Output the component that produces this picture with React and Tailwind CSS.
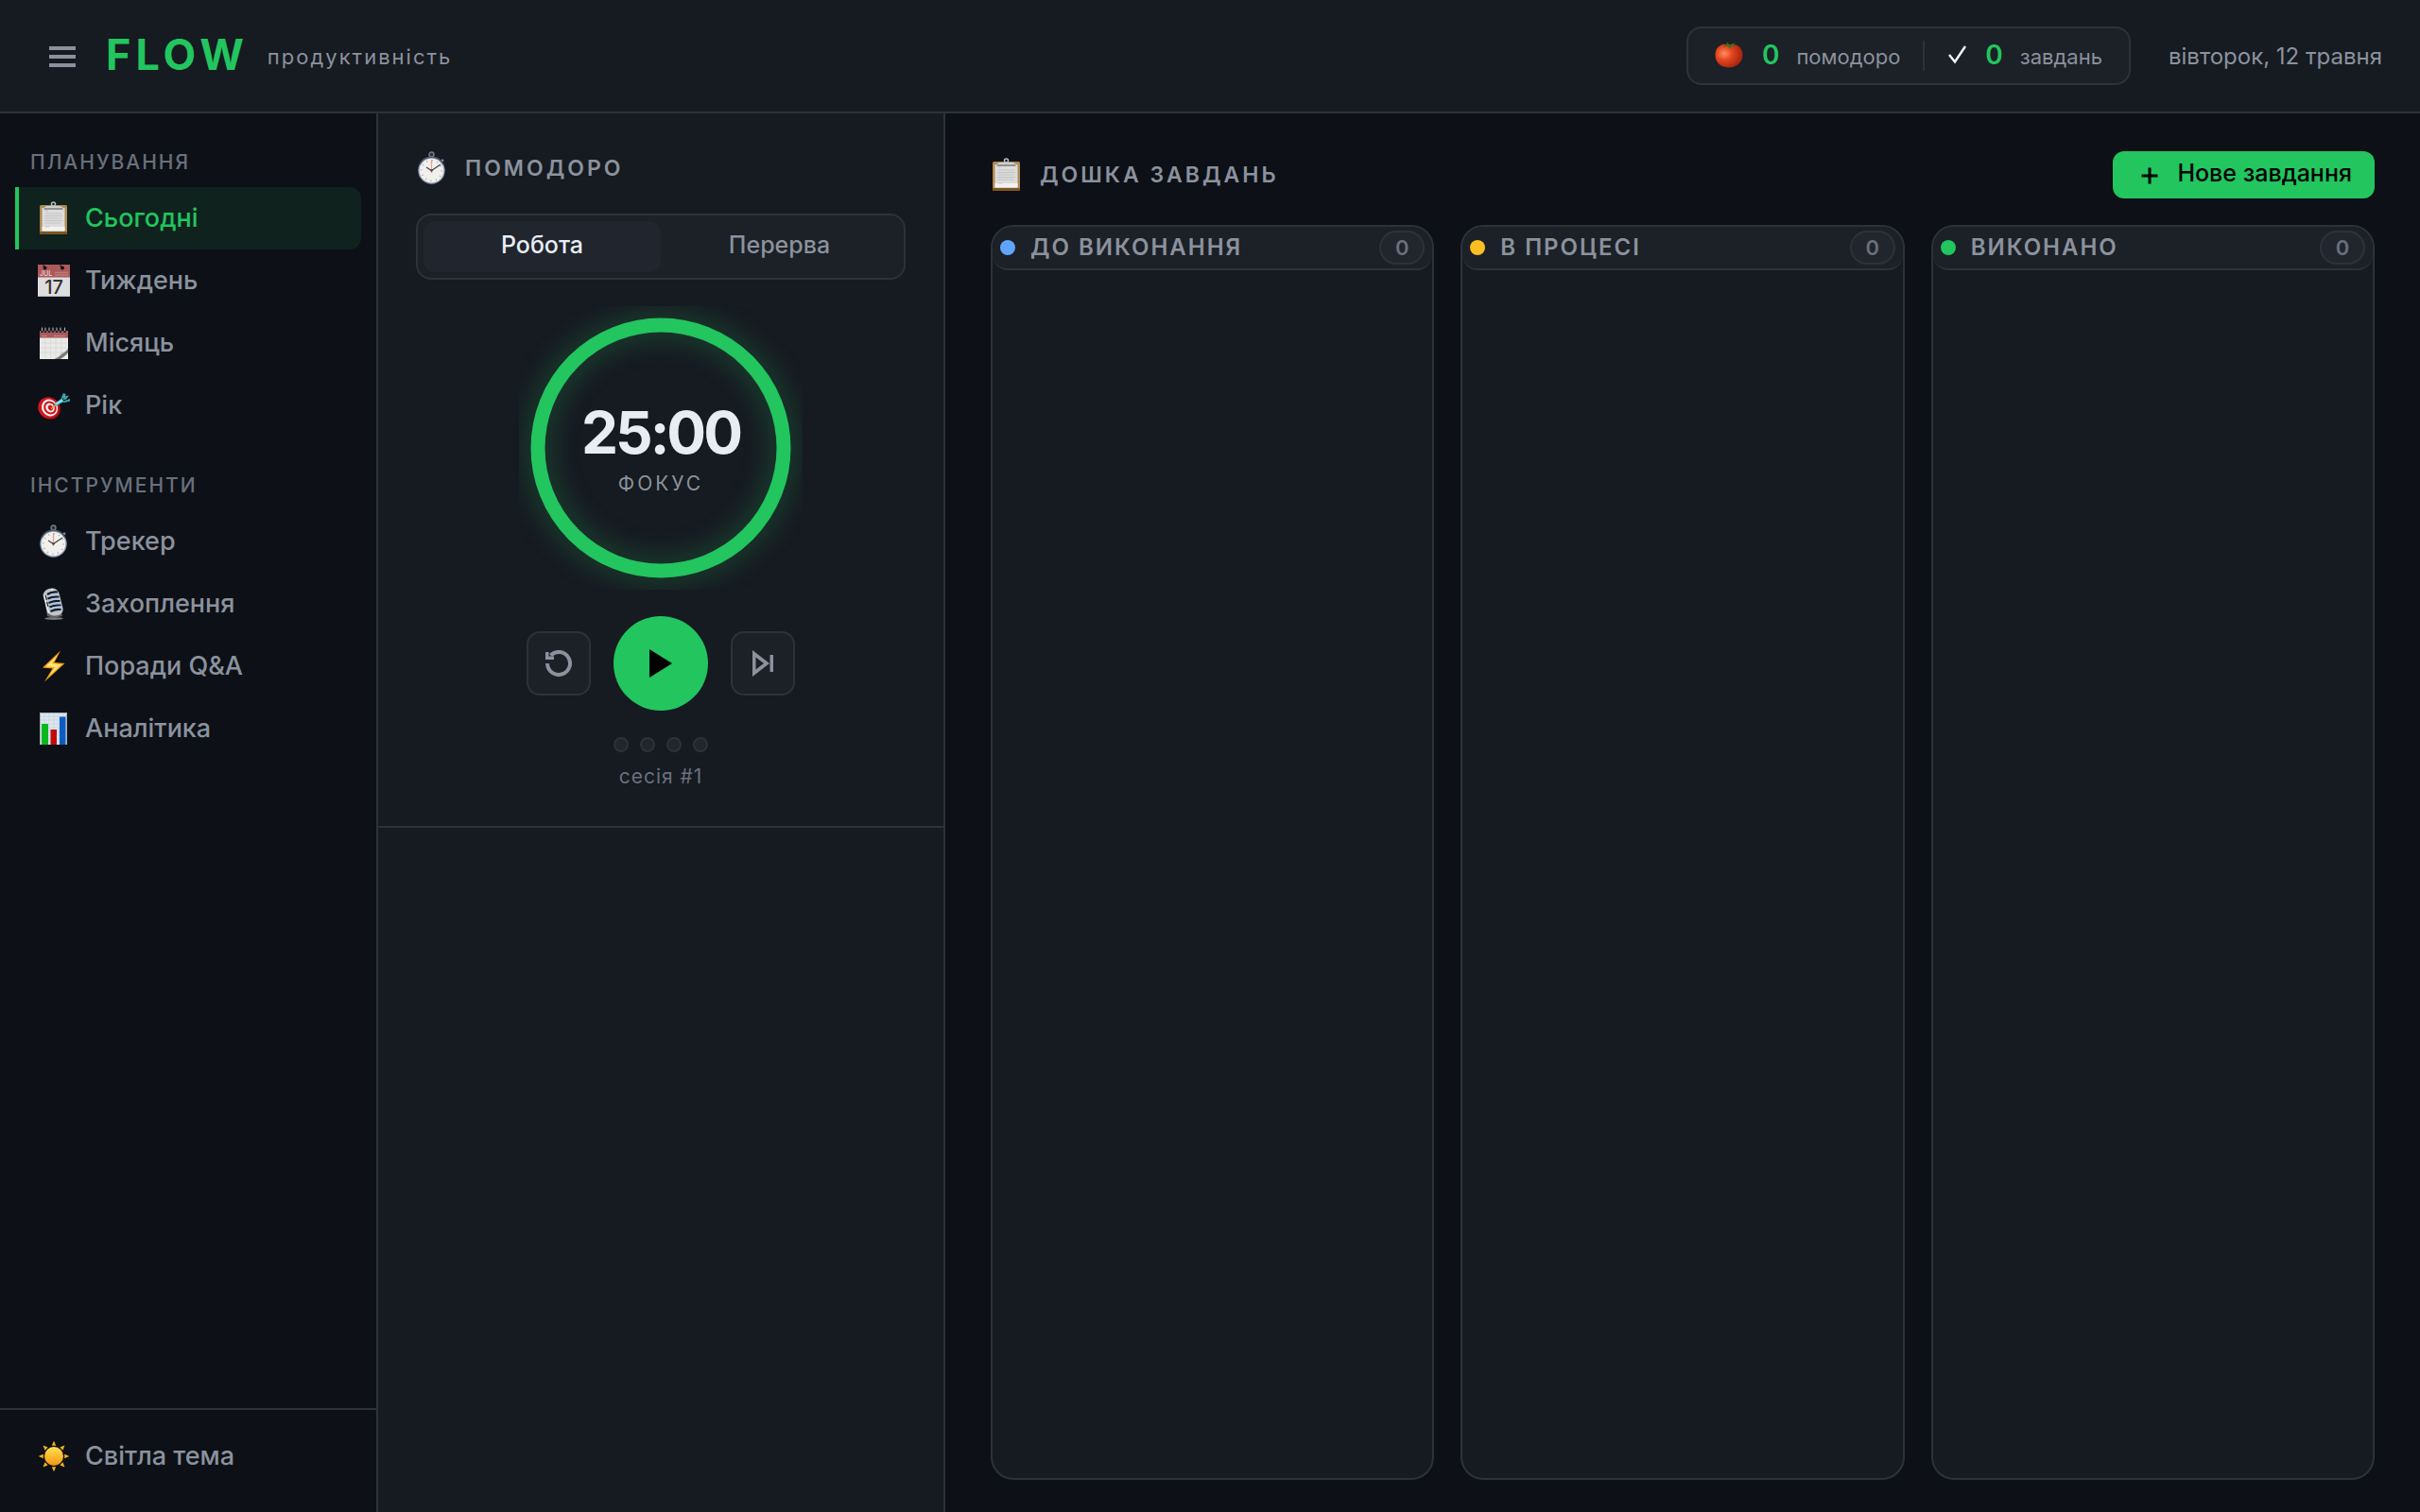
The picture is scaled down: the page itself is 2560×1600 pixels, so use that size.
import { useState } from "react";

const svgProps = { viewBox: "0 0 34 34", className: "h-[34px] w-[34px] shrink-0 overflow-visible", "aria-hidden": true };

function Clipboard() {
  return (
    <svg {...svgProps}>
      <rect x="2" y="3" width="29" height="31" rx="1.5" fill="#b08a50" />
      <rect x="2" y="31" width="29" height="3" rx="1" fill="#7c5624" />
      <rect x="4.500" y="6" width="24" height="24.500" fill="#dcdcdc" />
      <rect x="4.500" y="26" width="24" height="4.500" fill="#f2f2f2" />
      <path d="M8 12h17M7 14.500h19M7 17h18M7 19.500h19M7 22h17M8 26h4M8 9h3" stroke="#c4c4c4" strokeWidth="1" />
      <path d="M6.500 7.500V5.500l3-1.500h14l3 1.500v2z" fill="#d0d2d4" />
      <path d="M6.500 7h20" stroke="#6d6563" strokeWidth="1.200" />
      <circle cx="16.500" cy="2" r="2" fill="none" stroke="#b9c0c4" strokeWidth="1.500" />
    </svg>
  );
}

function CalendarDay() {
  return (
    <svg {...svgProps}>
      <rect width="34" height="34" fill="#dedede" />
      <rect width="34" height="13.500" fill="#ac5a5c" />
      <path d="M0 13.500h34" stroke="#c99999" strokeWidth="0.800" />
      <path d="M0 33.500h34" stroke="#b5b5b5" />
      <circle cx="7.500" cy="3.500" r="2" fill="#170e10" />
      <circle cx="26" cy="3.500" r="2" fill="#170e10" />
      <path d="M5.500 0.500l2 2.500M23.500 0.500l2 2.500" stroke="#170e10" strokeWidth="1.200" />
      <path d="M18.500 8.500h13M18.500 11h13" stroke="#cf9c9c" strokeWidth="1.600" strokeDasharray="1 1" />
      <text x="2" y="11.500" fontSize="7" fontFamily="Inter, sans-serif" fill="#f0d6d6">JUL</text>
      <text x="17" y="30.500" fontSize="20" textAnchor="middle" fontFamily="Inter, sans-serif" fill="#333">17</text>
    </svg>
  );
}

function CalendarSpiral() {
  return (
    <svg {...svgProps}>
      <rect x="2" y="4" width="30" height="30" fill="#e9e9e7" />
      <rect x="2" y="4" width="30" height="7.500" fill="#a9595b" />
      <path d="M3 17h28M3 22h27M3 27h22M8 12v21M13.500 12v21M19 12v20M25 12v15" stroke="#d6d6d4" strokeWidth="0.700" />
      <path d="M4.500 9.500h5M17 9.500h12" stroke="#cf9494" strokeWidth="1.200" strokeDasharray="2 0.800" />
      <path d="M4.500 1v5M8 1v5M12 1v5M16 1v5M20 1v5M24 1v5M28.500 1v5" stroke="#20272b" strokeWidth="2.400" />
      <path d="M4.500 0.500v3.500M8 0.500v3.500M12 0.500v3.500M16 0.500v3.500M20 0.500v3.500M24 0.500v3.500M28.500 0.500v3.500" stroke="#a4b4ba" strokeWidth="1" />
      <path d="M17 34c5-2 7-4 8-7 3 0 5-2 7-5v12z" fill="#b9b9b7" />
      <path d="M18 34c6-3 10-7 14-10v3c-3 3-6 5-8 7z" fill="#767674" />
      <path d="M24 34c3-1 6-4 8-6v6z" fill="#f3f3f1" />
    </svg>
  );
}

function Target() {
  return (
    <svg {...svgProps}>
      <g transform="translate(0 3)">
        <ellipse cx="13" cy="17.500" rx="11" ry="11.500" fill="#7d0f14" transform="rotate(-35 13 17.500)" />
        <ellipse cx="11.500" cy="16.500" rx="11" ry="11.500" fill="#d2161d" transform="rotate(-35 11.500 16.500)" />
        <ellipse cx="12.500" cy="16.500" rx="8.300" ry="9.300" fill="#f7efef" transform="rotate(-35 12.500 16.500)" />
        <ellipse cx="13" cy="16.500" rx="6.500" ry="7.300" fill="#cf141b" transform="rotate(-35 13 16.500)" />
        <ellipse cx="13" cy="16.500" rx="4.500" ry="5.200" fill="#f7efef" transform="rotate(-35 13 16.500)" />
        <ellipse cx="13.500" cy="16.500" rx="2.500" ry="3" fill="#cf141b" transform="rotate(-35 13.500 16.500)" />
        <path d="M14 17.500l5-4" stroke="#e0a23a" strokeWidth="1.500" />
        <path d="M17.500 12l8-5.500 2 3.500-9 5z" fill="#46c6d1" />
        <path d="M24.500 7l2.500-6 2.500 1-.5 4zM26 8.500l4-4.500 3-.5-3 4zM26 10l8-3v2.500L28 11z" fill="#3fa9ad" />
        <path d="M19 12.500l7-4" stroke="#b1f2f4" strokeWidth="1.200" />
      </g>
    </svg>
  );
}

function Stopwatch() {
  return (
    <svg {...svgProps}>
      <circle cx="16.500" cy="2.500" r="2.500" fill="#25303a" stroke="#71808c" strokeWidth="1.400" />
      <path d="M16.500 4.500v3" stroke="#8f9aa5" strokeWidth="4" />
      <path d="M26 10.500l3-2.500" stroke="#74879b" strokeWidth="2.600" />
      <circle cx="16.500" cy="19.500" r="14.200" fill="#8fa0b3" />
      <path d="M4 13a14 14 0 0 1 25 0" stroke="#4b5664" strokeWidth="1.500" fill="none" />
      <circle cx="16.500" cy="19.500" r="12.800" fill="#f1f0ef" />
      <circle cx="16.500" cy="19.500" r="10.700" fill="none" stroke="#9b9b9b" strokeWidth="1.600" strokeDasharray="0.900 4.700" />
      <path d="M16.500 8v14" stroke="#eda28f" strokeWidth="1.300" />
      <path d="M11 16l5.500 3.500L26 13" stroke="#3e464b" strokeWidth="1.200" fill="none" />
      <circle cx="16.500" cy="19.500" r="1.200" fill="#54463f" />
    </svg>
  );
}

function Microphone() {
  return (
    <svg {...svgProps}>
      <ellipse cx="17" cy="32.500" rx="10" ry="1.500" fill="#77787a" />
      <path d="M8 18l2 12 6 2 10-2-1-4z" fill="#5f6061" />
      <path d="M5.500 8C6 3 11 0 16 .5c4 .5 6 3 7 7l3.500 14c1 5-3 8-8 8-5 0-8-2-9-6z" fill="#bcc4c9" />
      <path d="M10 7c3-2 7-3 11-2.500M10.500 11.500c4-2 8-2.500 12-2M11.500 16c4-2 8-2.500 12-2M12.500 20.500c4-2 8-2.500 12-2M13.500 25c4-2 8-2.500 11-2" stroke="#15191d" strokeWidth="2.200" fill="none" />
      <path d="M10 9.500c4-2 8-2.500 12-2M11 14c4-2 8-2.500 12-2M12 18.500c4-2 8-2.500 12-2M13 22.500c4-2 8-2.500 12-2" stroke="#a9c3ea" strokeWidth="1.800" fill="none" />
      <path d="M7 8l4.500 19M15 1v2" stroke="#eef1f2" strokeWidth="1.500" />
      <path d="M8 8l1.500 5M9.500 15l1.500 5" stroke="#25292c" strokeWidth="1.200" />
    </svg>
  );
}

function Bolt() {
  return (
    <svg {...svgProps}>
      <path d="M24 .5L5 18.500l10.500 1L7 33.500 28.500 14l-11-1z" fill="#f6a10e" />
      <path d="M21 5L8.500 17.200l9.500.8-6 9.500 13-12.300-10-.9z" fill="#ffe681" />
    </svg>
  );
}

function BarChart() {
  return (
    <svg {...svgProps}>
      <rect x="2" y="0" width="29" height="34" fill="#dde6ee" />
      <path d="M3 4h27M3 8h27M3 12h27M3 16h27M3 20h27M3 24h27M3 28h27M7 1v32M12 1v32M17 1v32M22 1v32M27 1v32" stroke="#c3d0dc" strokeWidth="0.600" />
      <path d="M2.500 34V.5h28V34" stroke="#a8b0b9" fill="none" />
      <rect x="4" y="12" width="7" height="22" fill="#08b91b" />
      <rect x="13.500" y="18" width="6.500" height="16" fill="#c30a0c" />
      <rect x="23" y="4.500" width="6.500" height="29.500" fill="#0b5cc0" />
    </svg>
  );
}

function Sun() {
  return (
    <svg {...svgProps}>
      <defs>
        <linearGradient id="sun" x1="0" y1="0" x2="0" y2="1">
          <stop offset="0" stopColor="#ffe14d" />
          <stop offset="1" stopColor="#f09516" />
        </linearGradient>
      </defs>
      <circle cx="17" cy="17" r="10" fill="url(#sun)" />
      {[0, 45, 90, 135, 180, 225, 270, 315].map((a) => (
        <path key={a} d="M17 .8l2.200 5h-4.400z" fill="#f4b41e" transform={`rotate(${a} 17 17)`} />
      ))}
    </svg>
  );
}

function Tomato() {
  return (
    <svg viewBox="0 0 30 30" className="h-[30px] w-[30px]" aria-hidden="true">
      <defs>
        <radialGradient id="tomato" cx="0.330" cy="0.400" r="0.700">
          <stop offset="0" stopColor="#ff9166" />
          <stop offset="0.400" stopColor="#e6461f" />
          <stop offset="1" stopColor="#9c220d" />
        </radialGradient>
      </defs>
      <path d="M15 4.500C22 2 29.500 7 29.500 15S23 28.500 15 28.500.5 23.500.5 15 8 2 15 4.500z" fill="url(#tomato)" />
      <path d="M6 2.500l6 2 1.500-3 2 3L22 2l-3 2.500 5 1.500-6 0-2 2.500-2.500-3-4.500 1.500 1.500-2.500z" fill="#466b1e" />
    </svg>
  );
}

const planning = [
  ["Сьогодні", Clipboard],
  ["Тиждень", CalendarDay],
  ["Місяць", CalendarSpiral],
  ["Рік", Target],
];
const tools = [
  ["Трекер", Stopwatch],
  ["Захоплення", Microphone],
  ["Поради Q&A", Bolt],
  ["Аналітика", BarChart],
];

function NavItem({ label, Icon, active, onClick }) {
  return (
    <button
      type="button"
      onClick={onClick}
      className={`flex h-[66px] w-full items-center gap-4 rounded-r-xl border-l-4 pl-5 text-left text-[27px] font-medium ${
        active ? "border-[#22c55e] bg-[#0f221e] text-[#22c55e]" : "border-transparent text-[#8b929d]"
      }`}
    >
      <Icon />
      {label}
    </button>
  );
}

function NavGroup({ title, items, active, onSelect }) {
  return (
    <section>
      <h2 className="mb-3 px-4 text-[21px] leading-7 font-medium tracking-[2px] text-[#69707c]">{title}</h2>
      {items.map(([label, Icon]) => (
        <NavItem key={label} label={label} Icon={Icon} active={active === label} onClick={() => onSelect(label)} />
      ))}
    </section>
  );
}

function Stat({ icon, value, label }) {
  return (
    <div className="flex items-center gap-5 pb-0.5">
      {icon}
      <div className="flex items-baseline gap-[18px]">
        <span className="text-[28px] font-semibold text-[#22c55e]">{value}</span>
        <span className="text-[22px] text-[#8b929d]">{label}</span>
      </div>
    </div>
  );
}

function Column({ title, dot }) {
  return (
    <section className="flex-1 overflow-hidden rounded-3xl border-2 border-[#2d323a] bg-[#161a21]">
      <header className="flex h-[46px] items-center rounded-b-2xl border-b-2 border-[#2d323a] bg-[#1c2027] px-2">
        <span className={`h-4 w-4 rounded-full ${dot}`} />
        <h3 className="ml-4 flex-1 text-[24px] font-semibold tracking-[2px] text-[#8b929d]">{title}</h3>
        <span className="flex h-9 w-12 items-center justify-center rounded-full border-2 border-[#2d323a] bg-[#21252d] text-[22px] font-semibold text-[#69707c]">
          0
        </span>
      </header>
    </section>
  );
}

export default function App() {
  const [view, setView] = useState("Сьогодні");
  const [mode, setMode] = useState("Робота");
  return (
    <div className="flex min-h-screen flex-col bg-[#0d1017] font-[Inter,sans-serif] text-[#e8edf5]">
      <header className="flex h-[120px] items-center border-b-2 border-[#2d323a] bg-[#161a21] px-10">
        <button type="button" aria-label="Меню" className="mt-0.5 flex w-[52px] justify-center">
          <svg viewBox="0 0 28 22" className="h-[22px] w-7" fill="#8b929d">
            <path d="M0 0h28v4H0zM0 9h28v4H0zM0 18h28v4H0z" />
          </svg>
        </button>
        <div className="ml-5 flex items-center gap-5">
          <h1 className="pb-0.5 text-[45px] font-bold tracking-[5px] text-[#22c55e]">FLOW</h1>
          <span className="pt-0.5 text-[22px] tracking-[2px] text-[#8b929d]">продуктивність</span>
        </div>
        <div className="ml-auto flex h-[62px] items-center rounded-2xl border-2 border-[#2d323a] bg-[#1c2027] px-7">
          <Stat icon={<Tomato />} value="0" label="помодоро" />
          <div className="mx-6 h-8 w-0.5 bg-[#2d323a]" />
          <Stat
            icon={
              <svg viewBox="0 0 20 20" className="h-5 w-5" fill="none" stroke="#f1f4fa" strokeWidth="2.500" aria-hidden="true">
                <path d="M2 10l6 7.500L19 1" />
              </svg>
            }
            value="0"
            label="завдань"
          />
        </div>
        <time className="ml-10 pt-0.5 text-[24px] text-[#8b929d]">вівторок, 12 травня</time>
      </header>

      <div className="flex flex-1">
        <nav className="flex w-[400px] shrink-0 flex-col border-r-2 border-[#2d323a]">
          <div className="flex flex-1 flex-col gap-[38px] px-4 pt-[38px]">
            <NavGroup title="ПЛАНУВАННЯ" items={planning} active={view} onSelect={setView} />
            <NavGroup title="ІНСТРУМЕНТИ" items={tools} active={view} onSelect={setView} />
          </div>
          <div className="border-t-2 border-[#2d323a] px-4 pt-4 pb-[26px]">
            <NavItem label="Світла тема" Icon={Sun} />
          </div>
        </nav>

        <aside className="w-[600px] shrink-0 border-r-2 border-[#2d323a] bg-[#161a21]">
          <section className="flex flex-col items-center border-b-2 border-[#2d323a] px-10 pt-10 pb-10">
            <h2 className="flex h-9 items-center gap-[18px] self-stretch text-[23px] font-semibold tracking-[3px] text-[#8b929d]">
              <Stopwatch />
              ПОМОДОРО
            </h2>
            <div className="mt-[30px] flex h-[70px] self-stretch rounded-2xl border-2 border-[#2d323a] bg-[#1c2027] p-1.5">
              {["Робота", "Перерва"].map((m) => (
                <button
                  key={m}
                  type="button"
                  onClick={() => setMode(m)}
                  className={`flex-1 rounded-xl pb-0.5 text-[25px] font-medium ${
                    mode === m ? "bg-[#21252d] text-[#e8edf5]" : "text-[#8b929d]"
                  }`}
                >
                  {m}
                </button>
              ))}
            </div>
            <div className="mt-7 grid place-items-center">
              <svg viewBox="0 0 300 300" className="col-start-1 row-start-1 h-[300px] w-[300px] overflow-hidden">
                <circle
                  cx="150"
                  cy="150"
                  r="130"
                  fill="none"
                  stroke="#22c55e"
                  strokeWidth="15"
                  className="drop-shadow-[0_0_16px_rgba(34,197,94,0.400)]"
                />
              </svg>
              <div className="col-start-1 row-start-1 flex flex-col items-center pt-1">
                <span className="text-[62px] leading-[64px] font-bold tracking-[-3px]">25:00</span>
                <span className="mt-2 text-[21px] leading-7 tracking-[3px] text-[#8b929d]">ФОКУС</span>
              </div>
            </div>
            <div className="mt-7 flex items-center gap-6">
              <button
                type="button"
                aria-label="Скинути"
                className="flex h-[68px] w-[68px] items-center justify-center rounded-[14px] border-2 border-[#2d323a] bg-[#1c2027]"
              >
                <svg viewBox="0 0 28 28" className="h-7 w-7" fill="none" stroke="#8b929d" strokeWidth="4">
                  <path d="M2 14A12 12 0 1 0 5.500 5.500" />
                  <path d="M0 2h3.500v4.500H9V10H0z" fill="#8b929d" stroke="none" />
                </svg>
              </button>
              <button
                type="button"
                aria-label="Старт"
                className="flex h-[100px] w-[100px] items-center justify-center rounded-full bg-[#22c55e]"
              >
                <svg viewBox="0 0 24 30" className="h-[30px] w-6">
                  <path d="M0 0l24 15L0 30z" />
                </svg>
              </button>
              <button
                type="button"
                aria-label="Пропустити"
                className="flex h-[68px] w-[68px] items-center justify-center rounded-[14px] border-2 border-[#2d323a] bg-[#1c2027]"
              >
                <svg viewBox="0 0 22 28" className="h-7 w-[22px]" fill="#8b929d">
                  <path fillRule="evenodd" d="M0 0l18 14L0 28zM3.500 7.500v13l8.500-6.500z" />
                  <path d="M18.500 5h3.500v18h-3.500z" />
                </svg>
              </button>
            </div>
            <div className="mt-7 flex gap-3">
              {[1, 2, 3, 4].map((n) => (
                <span key={n} className="h-4 w-4 rounded-full border-2 border-[#2d323a] bg-[#21252d]" />
              ))}
            </div>
            <p className="mt-3 -mb-0.5 text-[21px] leading-7 tracking-[1px] text-[#69707c]">сесія #1</p>
          </section>
        </aside>

        <main className="flex flex-1 flex-col px-12 pt-10 pb-[34px]">
          <div className="flex h-[50px] items-center justify-between">
            <h2 className="flex items-center gap-[18px] text-[23px] font-semibold tracking-[3px] text-[#8b929d]">
              <Clipboard />
              ДОШКА ЗАВДАНЬ
            </h2>
            <button
              type="button"
              className="flex h-[50px] items-center gap-5 rounded-xl bg-[#22c55e] px-6 pb-0.5 text-[25px] font-medium text-black"
            >
              <svg viewBox="0 0 18 18" className="mt-1 ml-1.5 h-[18px] w-[18px]" stroke="#000" strokeWidth="3" aria-hidden="true">
                <path d="M9 0.500v17M0.500 9h17" />
              </svg>
              Нове завдання
            </button>
          </div>
          <div className="mt-7 flex flex-1 gap-7">
            <Column title="ДО ВИКОНАННЯ" dot="bg-[#60a5fa]" />
            <Column title="В ПРОЦЕСІ" dot="bg-[#fbbf24]" />
            <Column title="ВИКОНАНО" dot="bg-[#22c55e]" />
          </div>
        </main>
      </div>
    </div>
  );
}
